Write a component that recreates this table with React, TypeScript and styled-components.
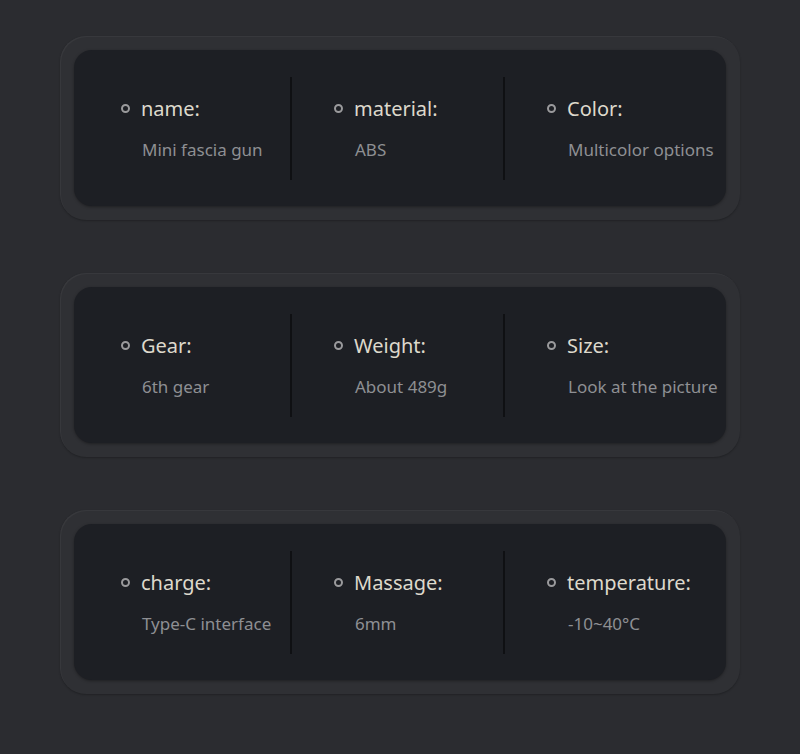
import React from "react";
import styled, { createGlobalStyle } from "styled-components";

const Global = createGlobalStyle`
  html, body { margin: 0; padding: 0; background: #2b2c30; }
  body { font-family: "Noto Sans", "Open Sans", sans-serif; }
`;

const Page = styled.div`
  width: 800px;
  height: 754px;
  box-sizing: border-box;
  padding: 36px 60px 0;
  display: flex;
  flex-direction: column;
  gap: 53px;
  background: #2b2c30;
`;

const Outer = styled.div`
  height: 184px;
  box-sizing: border-box;
  padding: 14px;
  border-radius: 26px;
  background: #2f3034;
  box-shadow: inset 1px 1px 1px rgba(255, 255, 255, 0.05),
    0 1px 2px rgba(0, 0, 0, 0.25);
`;

const Inner = styled.div`
  height: 156px;
  box-sizing: border-box;
  border-radius: 18px;
  background: #1d1f24;
  box-shadow: 0 1px 3px rgba(0, 0, 0, 0.35);
  display: flex;
  align-items: center;
  padding-left: 47px;
  gap: 42px;
`;

const Col = styled.div<{ $last?: boolean }>`
  width: 171px;
  height: 103px;
  box-sizing: border-box;
  border-right: ${(p) => (p.$last ? "none" : "2px solid #0f1013")};
  display: flex;
  flex-direction: column;
  padding-top: 20px;
  gap: 18px;
`;

const TitleRow = styled.div`
  display: flex;
  align-items: center;
  gap: 11px;
  height: 24px;
`;

const Dot = styled.span`
  width: 9px;
  height: 9px;
  box-sizing: border-box;
  border-radius: 50%;
  border: 2px solid #9a9a9c;
  flex-shrink: 0;
`;

const Title = styled.span`
  font-size: 20px;
  line-height: 24px;
  color: #ddd9cc;
  white-space: nowrap;
`;

const Value = styled.span`
  padding-left: 21px;
  font-size: 17px;
  line-height: 22px;
  color: #8e8f93;
  white-space: nowrap;
`;

const rows = [
  [
    ["name:", "Mini fascia gun"],
    ["material:", "ABS"],
    ["Color:", "Multicolor options"],
  ],
  [
    ["Gear:", "6th gear"],
    ["Weight:", "About 489g"],
    ["Size:", "Look at the picture"],
  ],
  [
    ["charge:", "Type-C interface"],
    ["Massage:", "6mm"],
    ["temperature:", "-10~40°C"],
  ],
];

export default function App() {
  return (
    <>
      <Global />
      <Page>
        {rows.map((row, i) => (
          <Outer key={i}>
            <Inner>
              {row.map(([t, v], j) => (
                <Col key={j} $last={j === row.length - 1}>
                  <TitleRow>
                    <Dot />
                    <Title>{t}</Title>
                  </TitleRow>
                  <Value>{v}</Value>
                </Col>
              ))}
            </Inner>
          </Outer>
        ))}
      </Page>
    </>
  );
}
